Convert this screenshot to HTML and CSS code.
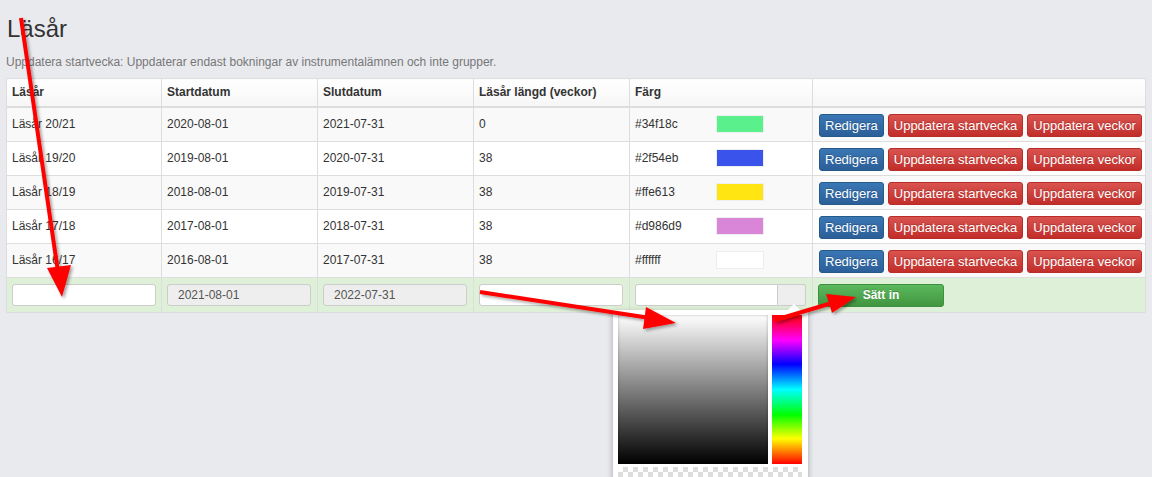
FILE: index.html
```html
<!DOCTYPE html>
<html lang="sv">
<head>
<meta charset="UTF-8">
<title>Läsår</title>
<link rel="stylesheet" href="styles.css">
</head>
<body>

<h1>Läsår</h1>
<p class="info">Uppdatera startvecka: Uppdaterar endast bokningar av instrumentalämnen och inte grupper.</p>

<table class="years">
<thead>
<tr>
    <th class="c1">Läsår</th>
    <th class="c2">Startdatum</th>
    <th class="c3">Slutdatum</th>
    <th class="c4">Läsår längd (veckor)</th>
    <th class="c5">Färg</th>
    <th></th>
</tr>
</thead>
<tbody>
<tr>
    <td>Läsår 20/21</td><td>2020-08-01</td><td>2021-07-31</td><td>0</td>
    <td><div class="color"><span>#34f18c</span><i class="swatch" style="background:#5af18c"></i></div></td>
    <td class="actions"><button class="btn blue">Redigera</button><button class="btn red">Uppdatera startvecka</button><button class="btn red">Uppdatera veckor</button></td>
</tr>
<tr>
    <td>Läsår 19/20</td><td>2019-08-01</td><td>2020-07-31</td><td>38</td>
    <td><div class="color"><span>#2f54eb</span><i class="swatch" style="background:#3a54eb"></i></div></td>
    <td class="actions"><button class="btn blue">Redigera</button><button class="btn red">Uppdatera startvecka</button><button class="btn red">Uppdatera veckor</button></td>
</tr>
<tr>
    <td>Läsår 18/19</td><td>2018-08-01</td><td>2019-07-31</td><td>38</td>
    <td><div class="color"><span>#ffe613</span><i class="swatch" style="background:#ffe613"></i></div></td>
    <td class="actions"><button class="btn blue">Redigera</button><button class="btn red">Uppdatera startvecka</button><button class="btn red">Uppdatera veckor</button></td>
</tr>
<tr>
    <td>Läsår 17/18</td><td>2017-08-01</td><td>2018-07-31</td><td>38</td>
    <td><div class="color"><span>#d986d9</span><i class="swatch" style="background:#d986d9"></i></div></td>
    <td class="actions"><button class="btn blue">Redigera</button><button class="btn red">Uppdatera startvecka</button><button class="btn red">Uppdatera veckor</button></td>
</tr>
<tr>
    <td>Läsår 16/17</td><td>2016-08-01</td><td>2017-07-31</td><td>38</td>
    <td><div class="color"><span>#ffffff</span><i class="swatch" style="background:#ffffff"></i></div></td>
    <td class="actions"><button class="btn blue">Redigera</button><button class="btn red">Uppdatera startvecka</button><button class="btn red">Uppdatera veckor</button></td>
</tr>
<tr class="new">
    <td><input type="text"></td>
    <td><input type="text" value="2021-08-01" disabled></td>
    <td><input type="text" value="2022-07-31" disabled></td>
    <td><input type="text"></td>
    <td>
        <div class="picker-group">
            <input type="text"><span class="addon"></span>
            <div class="picker">
                <div class="sat"></div>
                <div class="hue"></div>
                <div class="alpha"></div>
            </div>
        </div>
    </td>
    <td class="actions"><button class="btn green">Sätt in</button></td>
</tr>
</tbody>
</table>

<!-- annotation arrows -->
<svg class="arrows" width="1152" height="477" viewBox="0 0 1152 477">
    <defs>
        <filter id="sh" x="-20%" y="-20%" width="140%" height="140%">
            <feDropShadow dx="2" dy="2" stdDeviation="1.5" flood-color="#000" flood-opacity="0.35"/>
        </filter>
    </defs>
    <g fill="#f00" stroke="#f00" filter="url(#sh)">
        <line x1="21" y1="18" x2="58" y2="272" stroke-width="4"/>
        <polygon points="47,268 71,265 62,297" stroke="none"/>
        <line x1="480" y1="292" x2="650" y2="318" stroke-width="4"/>
        <polygon points="646,307 676,323 643,329" stroke="none"/>
        <line x1="775" y1="320" x2="832" y2="303" stroke-width="4"/>
        <polygon points="826,294 856,297 832,313" stroke="none"/>
    </g>
</svg>

</body>
</html>
```

FILE: styles.css
```css
body {
    margin: 0;
    padding: 0 6px;
    font-family: "Liberation Sans", Arial, sans-serif;
    font-size: 12px;
    color: #333;
    background: #e9eaee;
    position: relative;
    height: 477px;
    overflow: hidden;
}

h1 {
    font-weight: normal;
    font-size: 24px;
    line-height: 26px;
    margin: 0;
    padding: 16px 0 0 1px;
}

.info {
    color: #777;
    margin: 13px 0 9px 0;
    line-height: 14px;
}

/* Table */
.years {
    width: 1140px;
    border-collapse: collapse;
    background: #fff;
    border: 1px solid #ddd;
    table-layout: fixed;
}
.years th, .years td {
    border: 1px solid #ddd;
    text-align: left;
    vertical-align: top;
    padding: 8px 5px;
    line-height: 17px;
    white-space: nowrap;
}
.years th {
    padding: 5px 5px 5px;
    height: 17px;
    border-bottom: 2px solid #ddd;
    background: linear-gradient(#fff, #f6f6f6);
}
.years td { height: 17px; }
.c1 { width: 144px; }
.c2, .c3, .c4 { width: 145px; }
.c5 { width: 172px; }

.years tbody tr:nth-child(odd) { background: #f9f9f9; }
.years tbody tr.new { background: #dff0d8; }
.years tbody tr.new td { padding: 6px 5px 5px; height: 23px; }

.color { display: flex; align-items: flex-start; }
.color span { width: 81px; }
.swatch {
    display: block;
    width: 46px;
    height: 16px;
    margin-top: -1px;
    border: 1px solid #eee;
}

.years td.actions { padding: 6px 0 4px 6px; height: 23px; }

.btn {
    font-family: "Liberation Sans", Arial, sans-serif;
    font-size: 13px;
    line-height: 15px;
    height: 23px;
    padding: 3px 5px;
    margin: 0 4px 0 0;
    border-radius: 3px;
    color: #fff;
    text-shadow: 0 -1px 0 rgba(0,0,0,0.2);
    cursor: pointer;
}
.btn:last-child { margin-right: 0; }
.blue {
    background: linear-gradient(#3a77b5, #2c5f99);
    border: 1px solid #265a88;
}
.red {
    background: linear-gradient(#d9534f, #c12e2a);
    border: 1px solid #b92c28;
}
.green {
    width: 126px;
    background: linear-gradient(#5cb85c, #419641);
    border: 1px solid #3e8f3e;
    font-weight: bold;
    font-size: 12px;
}

.years input {
    box-sizing: border-box;
    width: 144px;
    height: 22px;
    margin: 0;
    padding: 2px 10px;
    font-family: "Liberation Sans", Arial, sans-serif;
    font-size: 12px;
    color: #555;
    background: #fff;
    border: 1px solid #ccc;
    border-radius: 3px;
}
.years input:disabled { background: #eee; }

/* colour picker */
.picker-group { display: flex; position: relative; width: 171px; }
.picker-group input {
    width: 143px;
    border-radius: 3px 0 0 3px;
}
.addon {
    width: 27px;
    height: 20px;
    background: #eee;
    border: 1px solid #ccc;
    border-left: none;
    border-radius: 0 3px 3px 0;
}
.picker {
    position: absolute;
    left: -22px;
    top: 26px;
    width: 185px;
    height: 175px;
    padding: 5px;
    background: #fff;
    box-shadow: 0 2px 6px rgba(0,0,0,0.3);
    display: grid;
    grid-template-columns: 150px 30px;
    grid-template-rows: 149px 20px;
    column-gap: 4px;
    row-gap: 3px;
    z-index: 2;
}
.picker::before {
    content: "";
    position: absolute;
    top: -6px;
    right: 8px;
    border: 6px solid transparent;
    border-top: none;
    border-bottom-color: #fff;
}
.sat {
    background: linear-gradient(#fff, #000);
    box-shadow: inset 0 0 3px rgba(0,0,0,0.3);
}
.hue {
    background: linear-gradient(#f00, #f0f 17%, #00f 33%, #0ff 50%, #0f0 67%, #ff0 83%, #f00);
}
.alpha {
    grid-column: 1 / 3;
    background-color: #fff;
    background-image:
        linear-gradient(45deg, #ddd 25%, transparent 25%, transparent 75%, #ddd 75%),
        linear-gradient(45deg, #ddd 25%, transparent 25%, transparent 75%, #ddd 75%);
    background-size: 10px 10px;
    background-position: 0 0, 5px 5px;
}

.arrows {
    position: absolute;
    left: 0;
    top: 0;
    pointer-events: none;
    z-index: 3;
}
```
